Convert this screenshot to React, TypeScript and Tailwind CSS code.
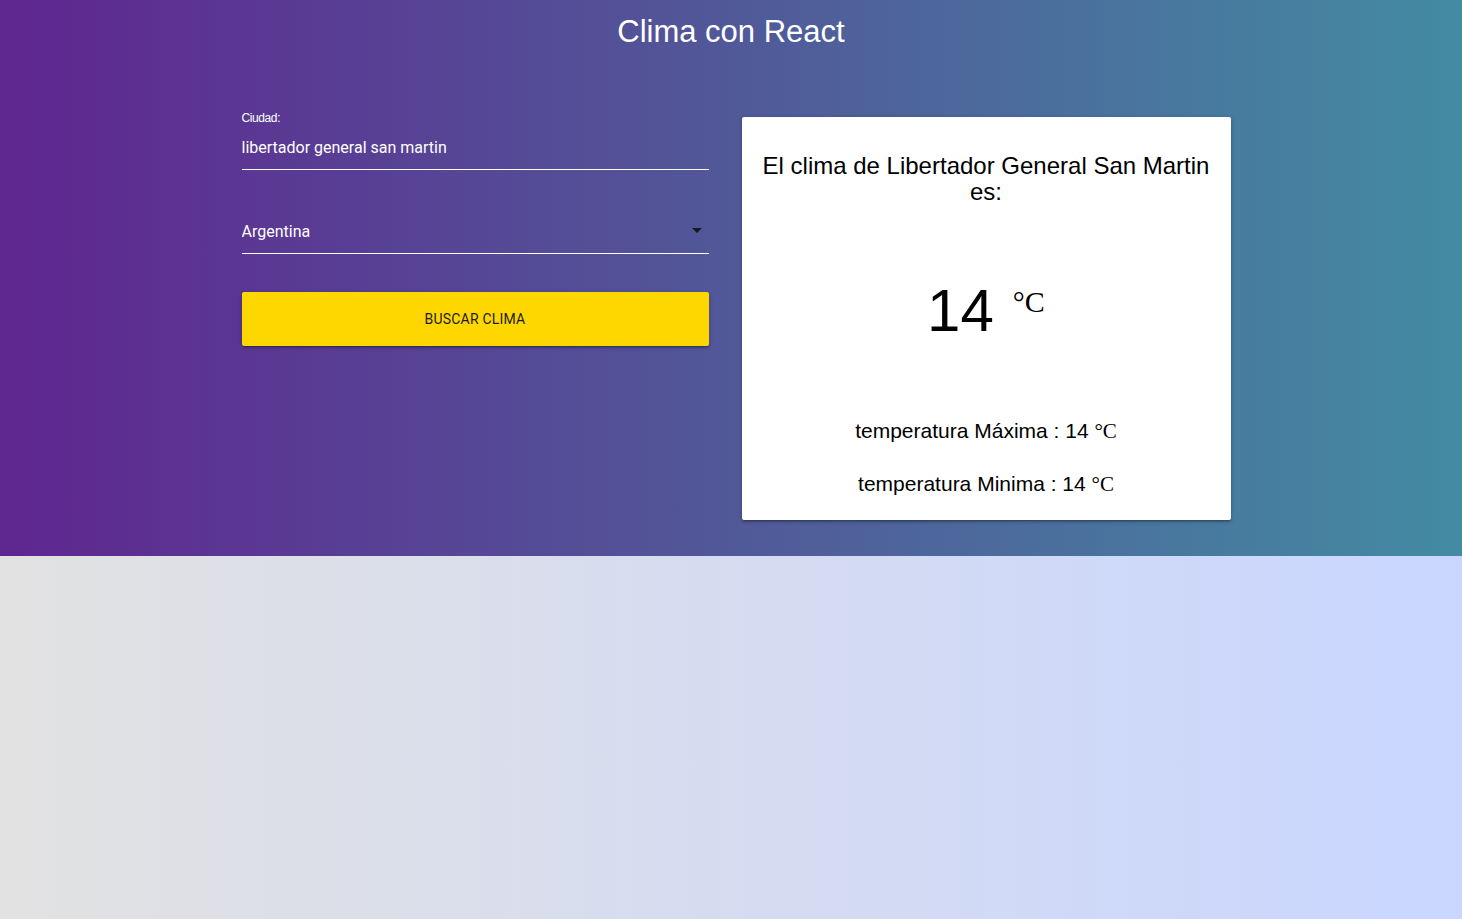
import { useState } from "react";

const countries = ["Argentina", "Colombia", "Costa Rica", "España", "Estados Unidos", "México", "Perú"];

const Caret = () => (
    <svg width="10" height="5" viewBox="0 0 10 5" className="absolute right-[7px] top-[16px] pointer-events-none">
        <path d="M0 0 L10 0 L5 5 Z" fill="#1a1a1a" />
    </svg>
);

const App = () => {
    const [ciudad, setCiudad] = useState("libertador general san martin");
    const [pais, setPais] = useState("Argentina");

    return (
        <div className="min-h-screen flex flex-col bg-linear-to-r/srgb from-[#e2e2e2] to-[#c9d6ff]">
            <header className="h-[556px] bg-linear-to-r/srgb from-[#5f2690] to-[#438ba2]">
                <h1 className="pt-[16px] text-center text-white text-[31px] leading-[31px] font-['Liberation_Sans',Arial,sans-serif]">
                    Clima con React
                </h1>

                <div className="mt-[62px] pl-[10px] flex justify-center items-start gap-[33px]">
                    {/* formulario */}
                    <form className="w-[467px] flex flex-col font-['Roboto','Noto_Sans',sans-serif]" onSubmit={(e) => e.preventDefault()}>
                        <label htmlFor="ciudad" className="mt-[3px] text-white text-[12px] leading-[12px] tracking-[-0.4px] font-['Liberation_Sans',Arial,sans-serif]">
                            Ciudad:
                        </label>
                        <input
                            id="ciudad"
                            value={ciudad}
                            onChange={(e) => setCiudad(e.target.value)}
                            className="mt-[4px] h-[42px] bg-transparent text-white text-[16px] border-b border-white outline-none pt-[1px] pb-[3px]"
                        />

                        <div className="relative mt-[42px]">
                            <select
                                value={pais}
                                onChange={(e) => setPais(e.target.value)}
                                className="w-full h-[42px] appearance-none bg-transparent text-white text-[16px] border-b border-white outline-none pt-[5px] pb-[6px]"
                            >
                                {countries.map((c) => (
                                    <option key={c} value={c} className="text-black">{c}</option>
                                ))}
                            </select>
                            <Caret />
                        </div>

                        <button
                            type="submit"
                            className="mt-[38px] h-[54px] w-full rounded-[2px] bg-[#ffd700] text-[#1c1c1c] text-[14px] tracking-[0.2px] shadow-[0_2px_2px_0_rgba(0,0,0,0.14),0_3px_1px_-2px_rgba(0,0,0,0.12),0_1px_5px_0_rgba(0,0,0,0.2)]"
                        >
                            BUSCAR CLIMA
                        </button>
                    </form>

                    {/* resultado */}
                    <div className="mt-[8px] w-[489px] h-[403px] bg-white rounded-[2px] text-black text-center px-[18px] pt-[36px] font-['Liberation_Sans',Arial,sans-serif] shadow-[0_2px_2px_0_rgba(0,0,0,0.14),0_3px_1px_-2px_rgba(0,0,0,0.12),0_1px_5px_0_rgba(0,0,0,0.2)]">
                        <h2 className="text-[24px] leading-[26px]">
                            El clima de Libertador General San Martin es:
                        </h2>
                        <div className="mt-[76px] flex justify-center items-start">
                            <span className="text-[60px] leading-[60px]">14</span>
                            <span className="ml-[19px] mt-[6px] text-[30px] leading-[30px] font-['Liberation_Serif','Times_New_Roman',serif]">°C</span>
                        </div>
                        <p className="mt-[79px] text-[21px] leading-[21px]">
                            temperatura Máxima : 14 <span className="font-['Liberation_Serif','Times_New_Roman',serif]">°C</span>
                        </p>
                        <p className="mt-[31px] text-[21px] leading-[21px]">
                            temperatura Minima : 14 <span className="font-['Liberation_Serif','Times_New_Roman',serif]">°C</span>
                        </p>
                    </div>
                </div>
            </header>
            <main className="flex-1" />
        </div>
    );
};

export default App;
